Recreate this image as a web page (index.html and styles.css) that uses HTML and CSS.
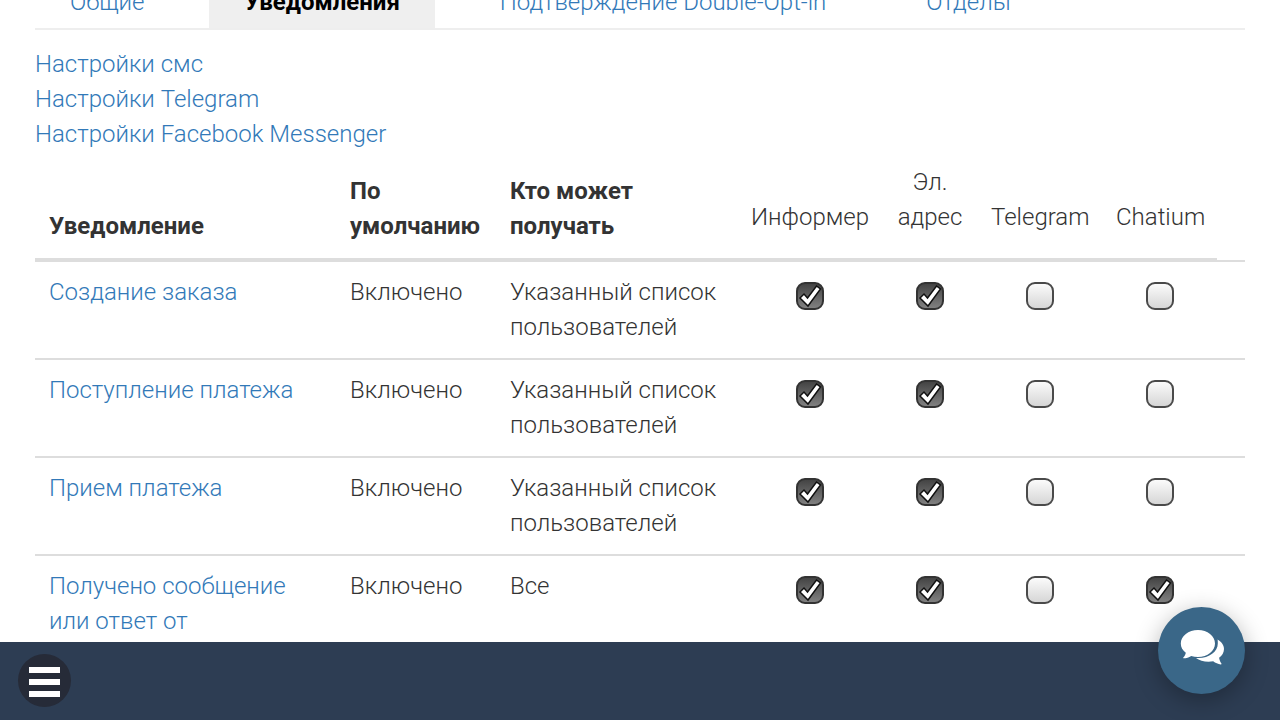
FILE: index.html
```html
<!DOCTYPE html>
<html lang="ru">
<head>
    <meta charset="UTF-8">
    <meta name="viewport" content="width=device-width, initial-scale=1.0">
    <title>Уведомления</title>
    <link rel="stylesheet" href="styles.css">
</head>
<body>
    <main class="page">
        <nav class="tabs">
            <a href="#general">Общие</a>
            <a href="#notifications" class="active">Уведомления</a>
            <a href="#optin">Подтверждение Double-Opt-in</a>
            <a href="#departments">Отделы</a>
        </nav>

        <div class="settings-links">
            <a href="#sms">Настройки смс</a>
            <a href="#telegram">Настройки Telegram</a>
            <a href="#messenger">Настройки Facebook Messenger</a>
        </div>

        <table class="notifications">
            <colgroup>
                <col class="col-name">
                <col class="col-default">
                <col class="col-who">
                <col class="col-informer">
                <col class="col-email">
                <col class="col-telegram">
                <col class="col-chatium">
                <col class="col-rest">
            </colgroup>
            <thead>
                <tr>
                    <th>Уведомление</th>
                    <th>По умолчанию</th>
                    <th>Кто может получать</th>
                    <th class="channel"><span id="informer">Информер</span></th>
                    <th class="channel"><span id="email">Эл. адрес</span></th>
                    <th class="channel"><span id="telegram">Telegram</span></th>
                    <th class="channel"><span id="chatium">Chatium</span></th>
                    <td></td>
                </tr>
            </thead>
            <tbody>
                <tr>
                    <td><a href="#order" id="order">Создание заказа</a></td>
                    <td>Включено</td>
                    <td>Указанный список пользователей</td>
                    <td><input type="checkbox" aria-labelledby="order informer" checked></td>
                    <td><input type="checkbox" aria-labelledby="order email" checked></td>
                    <td><input type="checkbox" aria-labelledby="order telegram"></td>
                    <td><input type="checkbox" aria-labelledby="order chatium"></td>
                    <td></td>
                </tr>
                <tr>
                    <td><a href="#income" id="income">Поступление платежа</a></td>
                    <td>Включено</td>
                    <td>Указанный список пользователей</td>
                    <td><input type="checkbox" aria-labelledby="income informer" checked></td>
                    <td><input type="checkbox" aria-labelledby="income email" checked></td>
                    <td><input type="checkbox" aria-labelledby="income telegram"></td>
                    <td><input type="checkbox" aria-labelledby="income chatium"></td>
                    <td></td>
                </tr>
                <tr>
                    <td><a href="#payment" id="payment">Прием платежа</a></td>
                    <td>Включено</td>
                    <td>Указанный список пользователей</td>
                    <td><input type="checkbox" aria-labelledby="payment informer" checked></td>
                    <td><input type="checkbox" aria-labelledby="payment email" checked></td>
                    <td><input type="checkbox" aria-labelledby="payment telegram"></td>
                    <td><input type="checkbox" aria-labelledby="payment chatium"></td>
                    <td></td>
                </tr>
                <tr>
                    <td><a href="#message" id="message">Получено сообщение или ответ от</a></td>
                    <td>Включено</td>
                    <td>Все</td>
                    <td><input type="checkbox" aria-labelledby="message informer" checked></td>
                    <td><input type="checkbox" aria-labelledby="message email" checked></td>
                    <td><input type="checkbox" aria-labelledby="message telegram"></td>
                    <td><input type="checkbox" aria-labelledby="message chatium" checked></td>
                    <td></td>
                </tr>
            </tbody>
        </table>
    </main>

    <footer class="bottom-bar">
        <button type="button" class="menu-btn" aria-label="Меню">
            <span></span>
            <span></span>
            <span></span>
        </button>
    </footer>

    <button type="button" class="chat-btn" aria-label="Чат">
        <svg width="44" height="36" viewBox="0 0 44 36" fill="#fff">
            <path d="M18 0C27.500 0 35 6 35 13.500C35 21 27.500 27 18 27C15.600 27 13.300 26.600 11.200 25.900C8.900 27.400 6.300 28.200 3.500 28.200C3.100 28.200 3 27.800 3.300 27.500C4.700 26.200 5.500 24.600 5.800 22.800C2.600 20.400 .800 17.200 .800 13.500C.800 6 8.500 0 18 0Z"/>
            <path d="M37.600 9.500C41.600 11.700 44 15.200 44 19C44 22.500 42.100 25.600 39.100 27.800C39.400 30 40.200 31.900 41.400 33.500C41.700 34 41.400 34.500 40.800 34.400C38 34 35.400 32.900 33.200 31.200C31.700 31.500 30.200 31.700 28.600 31.700C23.600 31.700 19 30.200 16 27.900C28 28.900 37.800 22.400 37.800 13.500C37.800 12.100 37.800 10.800 37.600 9.500Z"/>
        </svg>
    </button>
</body>
</html>
```
FILE: styles.css
```css
:root {
    --link: #3279b8;
    --text: #333;
    --line: #ddd;
    --bar: #2d3d53;
    --chat: #3a6788;
}

* {
    box-sizing: border-box;
}

body {
    margin: 0;
    font-family: Roboto, 'Noto Sans', sans-serif;
    font-size: 24px;
    font-weight: 300;
    line-height: 35px;
    color: var(--text);
    background: #fff;
}

a {
    color: var(--link);
    text-decoration: none;
}

.page {
    margin-top: -23px;
    padding: 0 35px;
}

/* Tabs */
.tabs {
    display: flex;
    gap: 30px;
    border-bottom: 2px solid #eee;
}

.tabs a {
    padding: 8px 35px;
    white-space: nowrap;
}

.tabs .active {
    background: #efefef;
    color: #000;
    font-weight: 700;
}

.settings-links {
    display: flex;
    flex-direction: column;
    align-items: flex-start;
    margin-top: 17px;
}

/* Notifications table */
.notifications {
    width: 100%;
    table-layout: fixed;
    border-collapse: separate;
    border-spacing: 0;
}

.col-default { width: 160px; }
.col-who { width: 241px; }
.col-informer { width: 146px; }
.col-email { width: 94px; }
.col-telegram { width: 125px; }
.col-chatium { width: 115px; }
.col-rest { width: 28px; }

th {
    padding: 13px 0 14px 14px;
    text-align: left;
    vertical-align: bottom;
    font-weight: 700;
    border-bottom: 4px solid var(--line);
}

th.channel {
    padding: 13px 14px 23px;
    text-align: center;
    font-weight: 300;
}

td {
    padding: 13px 14px;
    vertical-align: top;
    border-bottom: 2px solid var(--line);
}

input[type="checkbox"] {
    appearance: none;
    display: block;
    width: 28px;
    height: 28px;
    margin: 7px auto 0;
    border: 2px solid #4a4a4a;
    border-radius: 9px;
    background: linear-gradient(#fbfbfb, #d6d6d6);
}

input[type="checkbox"]:checked {
    border-color: #333;
    background:
        url("data:image/svg+xml,%3Csvg xmlns='http://www.w3.org/2000/svg' viewBox='0 0 28 28'%3E%3Cpath d='M4 16L8 12L11.500 16L20.500 4L24.500 7L12 24Z' fill='white' stroke='%23111' stroke-width='1.500'/%3E%3C/svg%3E") center / 28px 28px no-repeat border-box,
        linear-gradient(#444, #808080);
}

/* Bottom bar */
.bottom-bar {
    position: fixed;
    left: 0;
    right: 0;
    bottom: 0;
    display: flex;
    align-items: center;
    padding: 12px 18px 13px;
    background: var(--bar);
}

.menu-btn {
    display: flex;
    flex-direction: column;
    align-items: center;
    justify-content: center;
    gap: 6px;
    width: 53px;
    height: 53px;
    padding: 2px 0 0;
    border: none;
    border-radius: 50%;
    background: #262b38;
    cursor: pointer;
}

.menu-btn span {
    width: 31px;
    height: 6px;
    background: #fff;
}

.chat-btn {
    position: fixed;
    right: 35px;
    bottom: 26px;
    display: flex;
    align-items: center;
    justify-content: center;
    width: 87px;
    height: 87px;
    padding: 0 0 6px;
    border: none;
    border-radius: 50%;
    background: var(--chat);
    box-shadow: 0 6px 24px rgba(0, 0, 0, 0.3);
    cursor: pointer;
}
```
